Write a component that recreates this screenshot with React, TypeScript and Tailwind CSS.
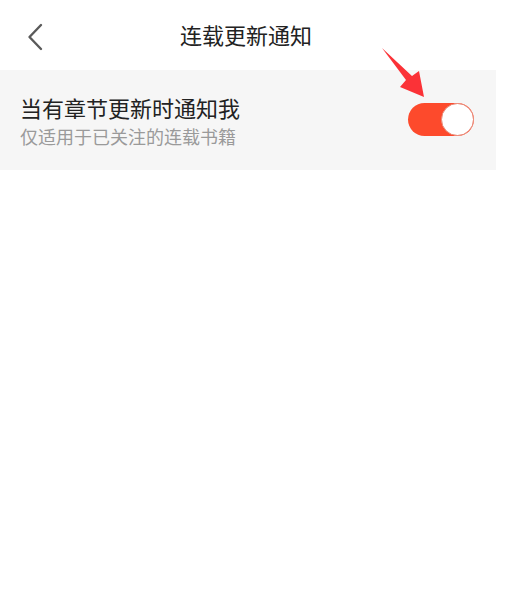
import React from 'react';

const App: React.FC = () => {
  return (
    <div className="relative w-[509px] h-[610px] bg-white overflow-hidden" style={{ fontFamily: '"Noto Sans CJK SC", "Noto Sans", sans-serif' }}>
      <div className="w-[496px]">
        {/* Header */}
        <div className="relative h-[70px] flex items-center justify-center">
          <button className="absolute left-[24px] top-[22px] w-[22px] h-[30px] flex items-center justify-center">
            <svg width="18" height="28" viewBox="0 0 18 28" fill="none">
              <path d="M15 2 L3.5 14 L15 26" stroke="#5a5a5a" strokeWidth="2.4" strokeLinecap="round" strokeLinejoin="round" />
            </svg>
          </button>
          <h1 className="text-[22px] leading-none text-[#222] -mt-[2px] -ml-[4px]">连载更新通知</h1>
        </div>

        {/* Setting row */}
        <div className="h-[100px] bg-[#f6f6f6] flex items-center justify-between pl-[20px] pr-[22px]">
          <div className="flex flex-col">
            <span className="text-[22px] leading-[28px] text-[#222]">当有章节更新时通知我</span>
            <span className="text-[18px] leading-[24px] text-[#9a9a9a] mt-[3px]">仅适用于已关注的连载书籍</span>
          </div>
          <div className="relative w-[66px] h-[33px] rounded-full bg-[#fd4a2c] -mt-[2px]">
            <div className="absolute right-0 top-0 w-[33px] h-[33px] rounded-full bg-white border border-[#e88a78]" />
          </div>
        </div>
      </div>

      {/* Annotation arrow */}
      <svg className="absolute left-0 top-0 pointer-events-none" width="509" height="610" viewBox="0 0 509 610">
        <polygon points="382,48 406,80 400,87 424,97 419,71 412,76" fill="#fb3237" />
      </svg>
    </div>
  );
};

export default App;
